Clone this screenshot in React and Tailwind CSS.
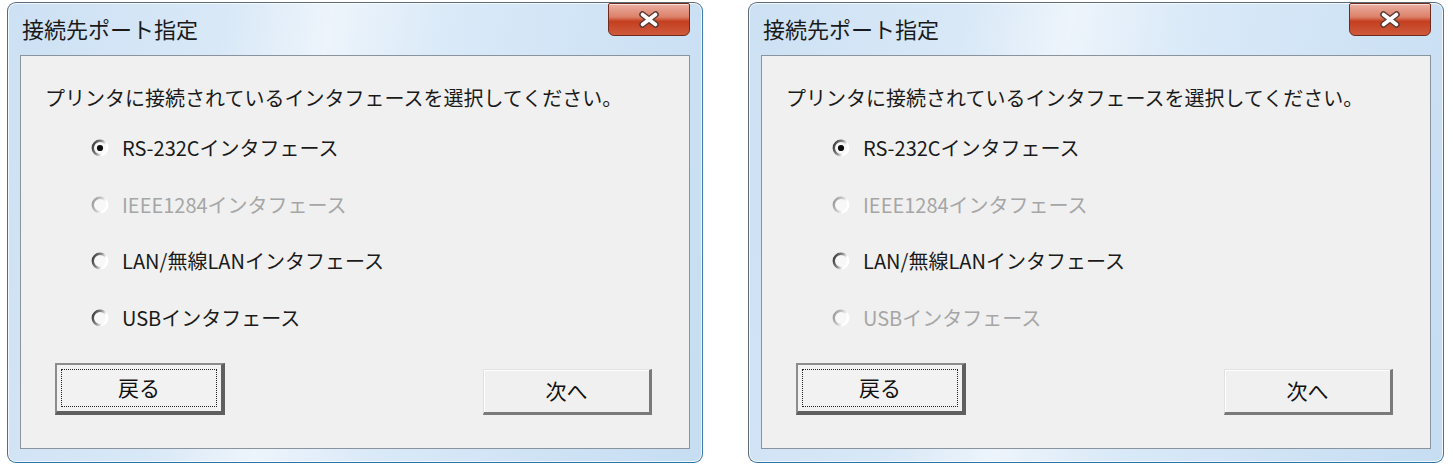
import { useState } from 'react';

// Port selection dialog, Vista style, shown twice side by side
const OPTIONS = [
  { id: 'rs232c', label: 'RS-232Cインタフェース' },
  { id: 'ieee', label: 'IEEE1284インタフェース' },
  { id: 'lan', label: 'LAN/無線LANインタフェース' },
  { id: 'usb', label: 'USBインタフェース' },
];

function Radio({ checked, disabled }) {
  const gid = `rg-${disabled ? 'd' : 'e'}`;
  return (
    <svg width="18" height="18" viewBox="0 0 18 18" className="shrink-0">
      <defs>
        <linearGradient id={gid} x1="0" y1="0.2" x2="1" y2="0.6">
          <stop offset="0" stopColor={disabled ? '#9a9a9a' : '#3c3c3c'} />
          <stop offset="0.45" stopColor={disabled ? '#c8c8c8' : '#8a8a8a'} />
          <stop offset="0.8" stopColor="#ffffff" />
        </linearGradient>
      </defs>
      <circle cx="9" cy="9" r="7.2" fill="#f8f8f8" stroke={`url(#${gid})`} strokeWidth="2.4" />
      {checked && <circle cx="9" cy="9" r="3.1" fill="#0d0d0d" />}
    </svg>
  );
}

function CloseButton() {
  return (
    <div className="flex h-[33px] w-[82px] items-center justify-center rounded-b-[6px] rounded-t-[2px] border border-[#6e2a1c] bg-[linear-gradient(to_bottom,#eab0a2_0%,#dc8068_42%,#c43f20_56%,#cf5a3c_100%)] shadow-[inset_0_1px_0_rgba(255,255,255,0.6)]">
      <svg width="22" height="17" viewBox="0 0 22 17">
        <path d="M4.5 3.5 L17.5 13.5 M17.5 3.5 L4.5 13.5" stroke="#5a3a34" strokeWidth="6.5" strokeLinecap="round" />
        <path d="M4.5 3.5 L17.5 13.5 M17.5 3.5 L4.5 13.5" stroke="#ffffff" strokeWidth="3.6" strokeLinecap="round" />
      </svg>
    </div>
  );
}

function Dialog({ disabledIds }) {
  const [selected, setSelected] = useState('rs232c');

  return (
    <div className="flex h-[461px] w-[696px] flex-col rounded-[9px] border border-[#5d6b79] border-b-[#2d74a6] border-r-[#3a7ba8] bg-[linear-gradient(100deg,#cde1f4_0%,#d8e8f7_28%,#edf4fb_42%,#d9e9f8_58%,#c6ddf2_100%)] px-[12px] pb-[13px] shadow-[inset_0_0_0_1px_rgba(255,255,255,0.75)]">
      {/* title bar */}
      <div className="flex h-[52px] items-start justify-between">
        <span className="mt-[12px] pl-[2px] text-[22px] leading-[26px] text-[#1a1a1a]">接続先ポート指定</span>
        <CloseButton />
      </div>

      {/* client area */}
      <div className="flex flex-1 flex-col border border-[#8a949e] bg-[#f0f0f0] pl-[24px] pt-[28px]">
        <p className="whitespace-nowrap text-[20px] leading-[28px] text-[#1a1a1a]">
          プリンタに接続されているインタフェースを選択してください。
        </p>

        <div className="ml-[46px] mt-[22px] flex flex-col gap-[28.7px]">
          {OPTIONS.map((opt) => {
            const disabled = disabledIds.includes(opt.id);
            return (
              <label
                key={opt.id}
                onClick={() => !disabled && setSelected(opt.id)}
                className="flex h-[28px] items-center gap-[13px]"
              >
                <Radio checked={selected === opt.id} disabled={disabled} />
                <span className={`whitespace-nowrap text-[20px] leading-[28px] ${disabled ? 'text-[#a6a6a6]' : 'text-[#1a1a1a]'}`}>
                  {opt.label}
                </span>
              </label>
            );
          })}
        </div>

        <div className="ml-[10px] mt-[31px] flex items-end">
          <button className="flex h-[52px] w-[170px] border-[2px] border-[#8c8c8c] border-b-[4px] border-r-[4px] border-b-[#5f5f5f] border-r-[#5f5f5f] bg-[#f2f2f2] p-[4px]">
            <span className="flex flex-1 items-center justify-center border-[1.5px] border-dotted border-[#222] text-[21px] text-[#111]">
              戻る
            </span>
          </button>
          <button className="ml-[258px] flex h-[46px] w-[169px] items-center justify-center border border-[#e2e2e2] border-b-[3px] border-r-[3px] border-b-[#7a7a7a] border-r-[#7a7a7a] bg-[#f0f0f0] text-[21px] text-[#111] shadow-[inset_1px_1px_0_#ffffff]">
            次へ
          </button>
        </div>
      </div>
    </div>
  );
}

export default function App() {
  return (
    <div className="flex h-[465px] w-[1453px] gap-[45px] bg-white pl-[7px] pt-[2px] font-['Noto_Sans_CJK_JP','Noto_Sans',sans-serif]">
      <Dialog disabledIds={['ieee']} />
      <Dialog disabledIds={['ieee', 'usb']} />
    </div>
  );
}
